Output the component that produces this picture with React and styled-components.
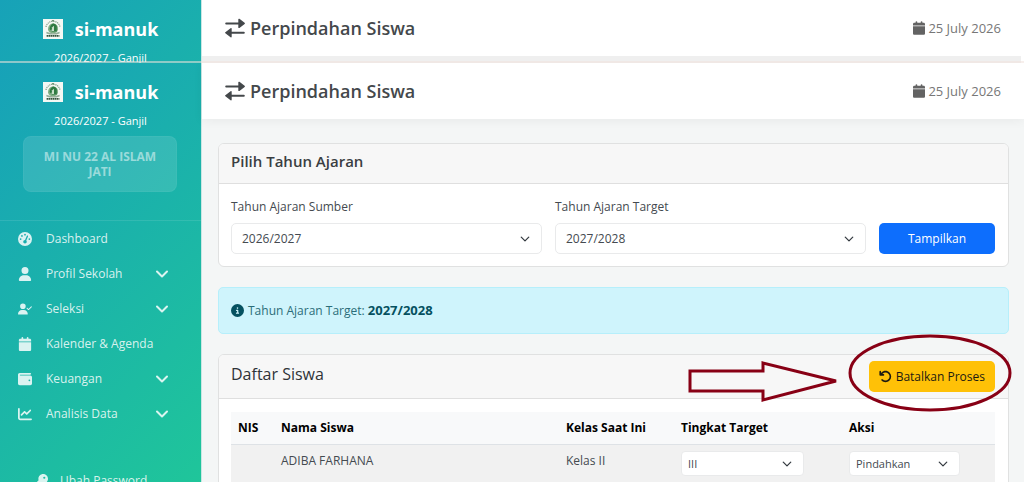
import React from "react";
import styled, { createGlobalStyle } from "styled-components";
import {
  FaArrowRotateLeft,
  FaCalendar,
  FaChartLine,
  FaCircleInfo,
  FaGaugeHigh,
  FaKey,
  FaUser,
  FaUserCheck,
  FaWallet,
} from "react-icons/fa6";

const menu = [
  { label: "Dashboard", icon: <FaGaugeHigh /> },
  { label: "Profil Sekolah", icon: <FaUser />, sub: true },
  { label: "Seleksi", icon: <FaUserCheck />, sub: true },
  { label: "Kalender & Agenda", icon: <FaCalendar /> },
  { label: "Keuangan", icon: <FaWallet />, sub: true },
  { label: "Analisis Data", icon: <FaChartLine />, sub: true },
];

const students = [
  { nis: "", name: "ADIBA FARHANA", kelas: "Kelas II", target: "III" },
];

const SwapIcon = () => (
  <svg width="20" height="20" viewBox="0 0 20 20" aria-hidden="true">
    <path
      d="M1.2 5.4H14M18.8 14.8H6"
      stroke="currentColor"
      strokeWidth="2"
      strokeLinecap="round"
    />
    <path
      d="M14 1.4V9.4L19.2 5.4ZM6 10.8V18.8L.8 14.8Z"
      fill="currentColor"
      stroke="currentColor"
      strokeWidth="1.4"
      strokeLinejoin="round"
    />
  </svg>
);

const Logo = () => (
  <svg width="20" height="20" viewBox="0 0 20 20" aria-hidden="true">
    <rect width="20" height="20" fill="#f4f8f4" />
    <path
      d="M3 8Q4 3 10 2Q16 3 17 8"
      fill="none"
      stroke="#7f9c86"
      strokeWidth="1.2"
      strokeDasharray="1.2 .8"
    />
    <circle cx="10" cy="1.8" r=".8" fill="#2f6b3c" />
    <path d="M10 4.2Q15.5 5 15 10.5Q14.5 14 10 14.4Q5.5 14 5 10.5Q5 5 10 4.2Z" fill="#7fae84" />
    <path d="M10.4 4.6Q7 6 6.6 10L9 12.6L13.8 12.4V7Q12.6 5 10.4 4.6Z" fill="#2f7a42" />
    <path d="M9.2 8.2L11 6.8V12H8.4Z" fill="#c9dfca" />
    <path d="M3.4 12.8Q10 15.6 16.6 12.8V14.4Q10 16.8 3.4 14.4Z" fill="#94ae99" />
    <path d="M3.6 16.9H16.4" stroke="#35543d" strokeWidth="1.8" strokeDasharray="1.6 .4" />
  </svg>
);

const SideBrand = () => (
  <Brand>
    <BrandLink href="#">
      <Logo />
      si-manuk
    </BrandLink>
    <Period>2026/2027 - Ganjil</Period>
  </Brand>
);

const PageHeader = () => (
  <TopBar>
    <Title>
      <SwapIcon />
      Perpindahan Siswa
    </Title>
    <Today>
      <FaCalendar />
      25 July 2026
    </Today>
  </TopBar>
);

const Select = ({ options, small, ...rest }) => (
  <SelectBox>
    <SelectInput $small={small} {...rest}>
      {options.map((o) => (
        <option key={o}>{o}</option>
      ))}
    </SelectInput>
    <Caret viewBox="0 0 16 16" aria-hidden="true">
      <path d="m2 5 6 6 6-6" />
    </Caret>
  </SelectBox>
);

const App = () => {
  return (
    <Page>
      <GlobalStyle />
      <Strip aria-hidden="true">
        <Sidebar as="div">
          <SideBrand />
        </Sidebar>
        <Main as="div" $inset>
          <PageHeader />
        </Main>
      </Strip>

      <Shell>
        <Sidebar>
          <SideBrand />
          <School>MI NU 22 AL ISLAM JATI</School>
          <Nav>
            {menu.map((item) => (
              <NavLink href="#" key={item.label}>
                <NavIcon>{item.icon}</NavIcon>
                {item.label}
                {item.sub && (
                  <Chevron viewBox="0 0 12 8" aria-hidden="true">
                    <path d="m1 1.5 5 5 5-5" />
                  </Chevron>
                )}
              </NavLink>
            ))}
            <SubLink href="#">
              <NavIcon>
                <FaKey />
              </NavIcon>
              Ubah Password
            </SubLink>
          </Nav>
        </Sidebar>

        <Main>
          <PageHeader />
          <Content>
            <Card>
              <CardHead>
                <CardTitle>Pilih Tahun Ajaran</CardTitle>
              </CardHead>
              <Form onSubmit={(e) => e.preventDefault()}>
                <Field>
                  <label htmlFor="sumber">Tahun Ajaran Sumber</label>
                  <Select id="sumber" options={["2026/2027", "2025/2026"]} />
                </Field>
                <Field>
                  <label htmlFor="target">Tahun Ajaran Target</label>
                  <Select id="target" options={["2027/2028", "2028/2029"]} />
                </Field>
                <Button type="submit">Tampilkan</Button>
              </Form>
            </Card>

            <Alert>
              <FaCircleInfo />
              <span>
                Tahun Ajaran Target: <b>2027/2028</b>
              </span>
            </Alert>

            <Card>
              <CardHead>
                <ListTitle>Daftar Siswa</ListTitle>
                <Button type="button" $warning>
                  <FaArrowRotateLeft />
                  Batalkan Proses
                </Button>
                <Marker viewBox="0 0 324 80" aria-hidden="true">
                  <path d="M2 37H75V29L148 47L75 66V57H2Z" />
                  <ellipse cx="242" cy="39" rx="80" ry="37" />
                </Marker>
              </CardHead>
              <TableWrap>
                <Table>
                  <thead>
                    <tr>
                      <Th $width="43px">NIS</Th>
                      <Th>Nama Siswa</Th>
                      <Th $width="115px">Kelas Saat Ini</Th>
                      <Th $width="168px">Tingkat Target</Th>
                      <Th $width="153px">Aksi</Th>
                    </tr>
                  </thead>
                  <tbody>
                    {students.map((s) => (
                      <tr key={s.name}>
                        <Td>{s.nis}</Td>
                        <Td>{s.name}</Td>
                        <Td>{s.kelas}</Td>
                        <Td>
                          <Cell $width="123px">
                            <Select
                              small
                              aria-label="Tingkat Target"
                              options={[s.target, "II", "I"]}
                            />
                          </Cell>
                        </Td>
                        <Td>
                          <Cell $width="111px">
                            <Select
                              small
                              aria-label="Aksi"
                              options={["Pindahkan", "Tinggal"]}
                            />
                          </Cell>
                        </Td>
                      </tr>
                    ))}
                  </tbody>
                </Table>
              </TableWrap>
            </Card>
          </Content>
        </Main>
      </Shell>
    </Page>
  );
};

export default App;

const GlobalStyle = createGlobalStyle`
  * {
    box-sizing: border-box;
  }

  body {
    margin: 0;
    font-family: "Open Sans", "Noto Sans", sans-serif;
    font-size: 12px;
    line-height: 20px;
    color: #444a50;
    background: #f4f6f6;
  }

  button,
  select {
    font: inherit;
  }

  a {
    color: inherit;
    text-decoration: none;
  }
`;

const Page = styled.div`
  display: flex;
  flex-direction: column;
  height: 100vh;
  overflow: hidden;
`;

const Strip = styled.div`
  position: relative;
  display: flex;
  flex: none;
  height: 63px;
  overflow: hidden;

  /* translucent seam over both columns */
  &::after {
    content: "";
    position: absolute;
    inset: auto 0 0;
    height: 2px;
    background: rgba(240, 225, 220, 0.55);
  }
`;

const Shell = styled.div`
  display: flex;
  flex: 1;
  min-height: 0;
`;

const Sidebar = styled.aside`
  flex: none;
  width: 202px;
  height: 100vh;
  color: white;
  background: linear-gradient(135deg, #17a2b8, #20c997);
  border-right: 1px solid #c9e6e3;
`;

const Brand = styled.div`
  display: flex;
  flex-direction: column;
  align-items: center;
  padding-top: 16px;
`;

const BrandLink = styled.a`
  display: flex;
  align-items: center;
  gap: 12px;
  font-size: 18px;
  font-weight: 700;
  line-height: 26px;
`;

const Period = styled.div`
  margin-top: 6px;
  font-size: 11px;
`;

const School = styled.div`
  margin: 5px 24px 28px 23px;
  padding: 12px 16px;
  border: 1px solid rgba(255, 255, 255, 0.04);
  border-radius: 8px;
  background: rgba(255, 255, 255, 0.12);
  color: rgba(255, 255, 255, 0.5);
  font-weight: 700;
  line-height: 15px;
  text-align: center;
`;

const Nav = styled.nav`
  border-top: 1px solid rgba(255, 255, 255, 0.1);
  color: rgba(255, 255, 255, 0.84);
`;

const NavLink = styled.a`
  display: flex;
  align-items: center;
  height: 35px;
  padding: 0 33px 0 18px;
`;

const NavIcon = styled.span`
  display: flex;
  flex: none;
  width: 28px;

  svg {
    width: auto;
    height: 14px;
  }
`;

const Chevron = styled.svg`
  width: 12px;
  height: 8px;
  margin-left: auto;
  fill: none;
  stroke: currentColor;
  stroke-width: 2;
  stroke-linecap: round;
  stroke-linejoin: round;
`;

const SubLink = styled(NavLink)`
  margin-top: 32px;
  padding-left: 34px;

  ${NavIcon} {
    width: 26px;
  }
`;

const Main = styled.main`
  flex: 1;
  min-width: 0;
  background: ${({ $inset }) => ($inset ? "#efefef" : "#f4f6f6")};
  border-right: ${({ $inset }) => ($inset ? "3px solid white" : "none")};
`;

const TopBar = styled.header`
  display: flex;
  align-items: center;
  justify-content: space-between;
  height: 56px;
  padding: 0 23px;
  background: white;
  box-shadow: 0 2px 10px rgba(0, 0, 0, 0.05);

  ${Strip} & {
    padding-right: 20px;
    box-shadow: none;
  }
`;

const Title = styled.h1`
  display: flex;
  align-items: center;
  gap: 5px;
  margin: 0;
  font-size: 18px;
  font-weight: 600;
  color: #44484b;
`;

const Today = styled.div`
  display: flex;
  align-items: center;
  gap: 3px;
  font-size: 13px;
  color: #777;

  svg {
    width: 12px;
    height: 14px;
    color: #636363;
  }
`;

const Content = styled.div`
  display: flex;
  flex-direction: column;
  gap: 20px;
  padding: 24px 15px 24px 16px;
`;

const Card = styled.section`
  border: 1px solid #e0e1e1;
  border-radius: 6px;
  background: white;
`;

const CardHead = styled.div`
  position: relative;
  display: flex;
  align-items: center;
  justify-content: space-between;
  padding: 6px 13px 6px 12px;
  border-bottom: 1px solid #dfdfdf;
  border-radius: 5px 5px 0 0;
  background: #f7f7f7;
`;

const CardTitle = styled.h2`
  margin: 0 0 4px;
  font-size: 15px;
  font-weight: 600;
  line-height: 23px;
  color: #3a3e42;
`;

const ListTitle = styled(CardTitle)`
  font-size: 16px;
  font-weight: 400;
  color: #2f3337;
`;

const Form = styled.form`
  display: grid;
  grid-template-columns: 5fr 5fr 116px;
  align-items: end;
  gap: 13px;
  padding: 13px 13px 12px 12px;
`;

const Field = styled.div`
  display: flex;
  flex-direction: column;
  gap: 6px;
`;

const SelectBox = styled.div`
  display: grid;
  align-items: center;

  > * {
    grid-area: 1 / 1;
  }
`;

const SelectInput = styled.select`
  appearance: none;
  width: 100%;
  height: ${({ $small }) => ($small ? "25px" : "31px")};
  padding: 0 ${({ $small }) => ($small ? "6px" : "10px")};
  border: 1px solid #e9eaeb;
  border-radius: ${({ $small }) => ($small ? "4px" : "5px")};
  background: white;
  color: #444a50;
  font-size: ${({ $small }) => ($small ? "11px" : "12px")};
`;

const Caret = styled.svg`
  justify-self: end;
  width: 10px;
  height: 10px;
  margin-right: 12px;
  fill: none;
  stroke: #343a40;
  stroke-width: 2;
  stroke-linecap: round;
  stroke-linejoin: round;
  pointer-events: none;
`;

const Button = styled.button`
  display: flex;
  align-items: center;
  justify-content: center;
  gap: 4px;
  height: 31px;
  padding: 0 10px;
  border: 0;
  border-radius: 5px;
  background: ${({ $warning }) => ($warning ? "#ffc107" : "#0d6efd")};
  color: ${({ $warning }) => ($warning ? "#1c1a12" : "white")};
  cursor: pointer;

  svg {
    width: 13px;
    height: 13px;
  }
`;

const Alert = styled.div`
  display: flex;
  align-items: center;
  gap: 4px;
  padding: 12px;
  border: 1px solid #b6effb;
  border-radius: 5px;
  background: #cff4fc;
  color: #2b6d79;

  svg {
    width: 13px;
    height: 13px;
    color: #055160;
  }

  b {
    font-size: 13px;
    color: #055160;
  }
`;

/* hand-drawn arrow and circle laid over the card header */
const Marker = styled.svg`
  position: absolute;
  top: -21px;
  right: -4px;
  width: 324px;
  height: 80px;
  fill: none;
  stroke: #880015;
  stroke-width: 3;
  pointer-events: none;
`;

const TableWrap = styled.div`
  padding: 13px 13px 13px 12px;
`;

const Table = styled.table`
  width: 100%;
  border-collapse: collapse;
  table-layout: fixed;
`;

const Th = styled.th`
  width: ${({ $width }) => $width || "auto"};
  padding: 6px 7px;
  border-bottom: 1px solid #dee2e6;
  background: #f8f9fa;
  color: black;
  font-weight: 700;
  text-align: left;
`;

const Td = styled.td`
  padding: 6px 7px;
  border-bottom: 1px solid #dee2e6;
  background: #f1f1f1;
  vertical-align: top;
`;

const Cell = styled.div`
  width: ${({ $width }) => $width};
`;
